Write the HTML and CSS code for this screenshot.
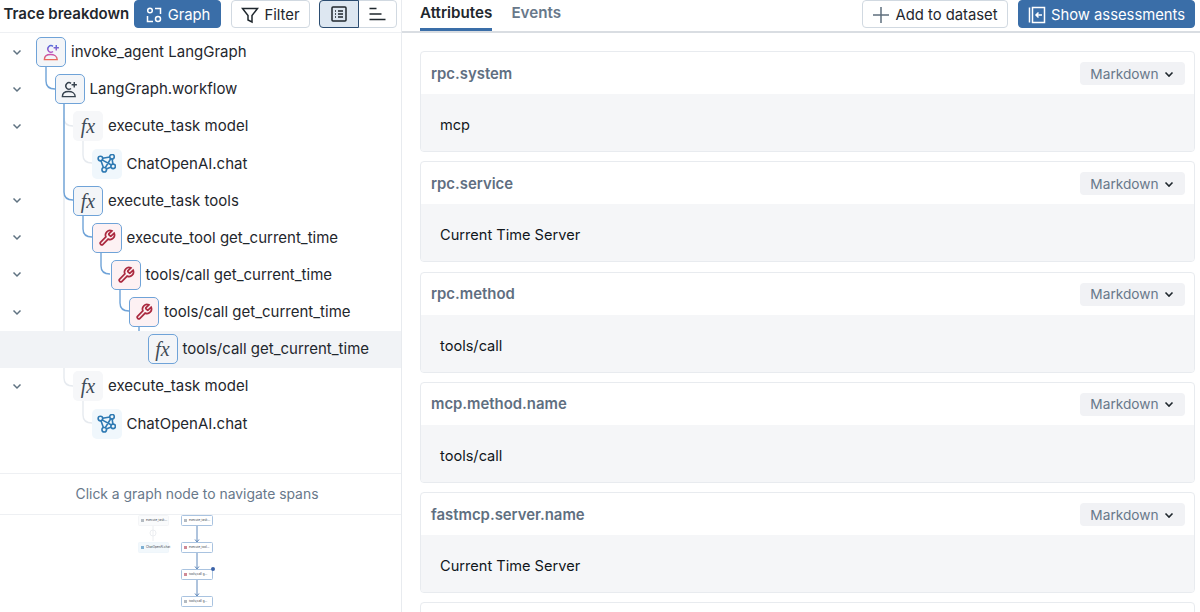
FILE: index.html
```html
<!DOCTYPE html>
<html>
<head>
<link rel="stylesheet" href="styles.css">
</head>
<body>

<svg class="defs" width="0" height="0">
  <defs>
    <linearGradient id="agentGradient" gradientUnits="userSpaceOnUse" x1="0" y1="2" x2="0" y2="18">
      <stop offset="0" stop-color="#4f6fdc"/>
      <stop offset="0.55" stop-color="#c04fc0"/>
      <stop offset="1" stop-color="#ee6a4f"/>
    </linearGradient>
    <symbol id="person" viewBox="0 0 20 20">
      <path d="M11.6 3.6A3.4 3.4 0 1 0 11.6 9"/>
      <path d="M2.5 17.5c0-3.6 2.9-5.4 6.5-5.4s7 1.8 7 5.4z"/>
      <path d="M15 2.2v5.6M12.2 5h5.6"/>
    </symbol>
    <symbol id="wrench" viewBox="0 0 24 24">
      <path d="M14.7 6.3a1 1 0 0 0 0 1.4l1.6 1.6a1 1 0 0 0 1.4 0l3.77-3.77a6 6 0 0 1-7.94 7.94l-6.91 6.91a2.12 2.12 0 0 1-3-3l6.91-6.91a6 6 0 0 1 7.94-7.94l-3.76 3.76z"/>
    </symbol>
    <symbol id="model" viewBox="0 0 20 20">
      <circle cx="3.6" cy="4.8" r="2.4"/>
      <circle cx="15.8" cy="2.9" r="2.4"/>
      <circle cx="17" cy="13" r="2.4"/>
      <circle cx="7.6" cy="16.6" r="2.4"/>
      <path d="M5.8 4.5l7.8-1.3M15.9 5.1l.9 5.7M15 13.8l-5.3 2M6.8 14.5L4.2 7M5.4 6.2l9.8 5.4M8.6 14.6l6-9.9"/>
    </symbol>
    <symbol id="chevron" viewBox="0 0 12 12">
      <path d="M2.5 4.5L6 8l3.5-3.5"/>
    </symbol>
  </defs>
</svg>

<div class="page">
  <section class="left-panel">
    <header class="left-header">
      <span class="panel-title">Trace breakdown</span>
      <button class="btn btn-primary btn-graph">
        <svg class="btn-icon" viewBox="0 0 18 18"><circle cx="5" cy="4.5" r="2.3"/><path d="M10 2.5h5.5V8M2.5 10v5.5H8"/><circle cx="13" cy="13" r="2.5"/></svg>
        Graph
      </button>
      <button class="btn btn-filter">
        <svg class="btn-icon" viewBox="0 0 18 18"><path d="M1.5 2.5h15L11 9.5V16l-4-2V9.5z"/></svg>
        Filter
      </button>
      <div class="toggle">
        <span class="toggle-item toggle-on">
          <svg class="btn-icon" viewBox="0 0 18 18"><rect x="2" y="2" width="14" height="14" rx="1"/><path d="M5 6h1M8 6h5M5 9h1M8 9h5M5 12h1M8 12h5"/></svg>
        </span>
        <span class="toggle-item">
          <svg class="btn-icon" viewBox="0 0 18 18"><path d="M1.5 3.5h7M1.5 9h12M1.5 14.5h16"/></svg>
        </span>
      </div>
    </header>

    <div class="tree">
      <svg class="links" width="401" height="440" viewBox="0 33 401 440">
        <path class="link-off" d="M64 104V378Q64 386 73 386"/>
        <path class="link-off" d="M64 118Q64 126 73 126"/>
        <path class="link-off" d="M83 141V155Q83 163 92 163"/>
        <path class="link-off" d="M83 401V415Q83 423 92 423"/>
        <path class="link-on" d="M46 67V81Q46 89 55 89"/>
        <path class="link-on" d="M64 104V192Q64 200 73 200"/>
        <path class="link-on" d="M83 215V229Q83 237 92 237"/>
        <path class="link-on" d="M101 252V266Q101 274 110 274"/>
        <path class="link-on" d="M120 289V303Q120 311 129 311"/>
        <path class="link-on" d="M139 326V340Q139 348 148 348"/>
      </svg>

      <div class="row lvl-0">
        <svg class="chevron"><use href="#chevron"/></svg>
        <span class="node node-on"><svg class="icon icon-agent"><use href="#person"/></svg></span>
        <span class="row-label">invoke_agent LangGraph</span>
      </div>
      <div class="row lvl-1">
        <svg class="chevron"><use href="#chevron"/></svg>
        <span class="node node-on"><svg class="icon icon-person"><use href="#person"/></svg></span>
        <span class="row-label">LangGraph.workflow</span>
      </div>
      <div class="row lvl-2">
        <svg class="chevron"><use href="#chevron"/></svg>
        <span class="node node-off"><span class="fx">fx</span></span>
        <span class="row-label">execute_task model</span>
      </div>
      <div class="row lvl-3">
        <span class="node node-off node-model"><svg class="icon icon-model"><use href="#model"/></svg></span>
        <span class="row-label">ChatOpenAI.chat</span>
      </div>
      <div class="row lvl-2">
        <svg class="chevron"><use href="#chevron"/></svg>
        <span class="node node-on"><span class="fx">fx</span></span>
        <span class="row-label">execute_task tools</span>
      </div>
      <div class="row lvl-3">
        <svg class="chevron"><use href="#chevron"/></svg>
        <span class="node node-on node-tool"><svg class="icon icon-wrench"><use href="#wrench"/></svg></span>
        <span class="row-label">execute_tool get_current_time</span>
      </div>
      <div class="row lvl-4">
        <svg class="chevron"><use href="#chevron"/></svg>
        <span class="node node-on node-tool"><svg class="icon icon-wrench"><use href="#wrench"/></svg></span>
        <span class="row-label">tools/call get_current_time</span>
      </div>
      <div class="row lvl-5">
        <svg class="chevron"><use href="#chevron"/></svg>
        <span class="node node-on node-tool"><svg class="icon icon-wrench"><use href="#wrench"/></svg></span>
        <span class="row-label">tools/call get_current_time</span>
      </div>
      <div class="row lvl-6 row-selected">
        <span class="node node-on"><span class="fx">fx</span></span>
        <span class="row-label">tools/call get_current_time</span>
      </div>
      <div class="row lvl-2">
        <svg class="chevron"><use href="#chevron"/></svg>
        <span class="node node-off"><span class="fx">fx</span></span>
        <span class="row-label">execute_task model</span>
      </div>
      <div class="row lvl-3">
        <span class="node node-off node-model"><svg class="icon icon-model"><use href="#model"/></svg></span>
        <span class="row-label">ChatOpenAI.chat</span>
      </div>
    </div>

    <div class="hint">Click a graph node to navigate spans</div>

    <div class="minimap">
      <svg class="mini-links" width="401" height="97" viewBox="0 515 401 97">
        <path d="M197 525V541M197 552V568M197 579V595"/>
        <path d="M195 539.5l2 2.5 2-2.5M195 566.5l2 2.5 2-2.5M195 593.5l2 2.5 2-2.5"/>
        <path class="mini-off" d="M153 525V541"/>
        <circle class="mini-off" cx="153" cy="533" r="3"/>
      </svg>
      <div class="mini-node mini-a">execute_task...</div>
      <div class="mini-node mini-b">execute_task...</div>
      <div class="mini-node mini-c">ChatOpenAI.chat</div>
      <div class="mini-node mini-d">execute_tool...</div>
      <div class="mini-node mini-e">tools/call g...</div>
      <div class="mini-node mini-f">tools/call g...</div>
      <span class="mini-dot"></span>
    </div>
  </section>

  <section class="right-panel">
    <header class="right-header">
      <nav class="tabs">
        <span class="tab tab-active">Attributes</span>
        <span class="tab">Events</span>
      </nav>
      <div class="actions">
        <button class="btn btn-add">
          <svg class="btn-icon plus-icon" viewBox="0 0 18 18"><path d="M9 1v16M1 9h16"/></svg>
          Add to dataset
        </button>
        <button class="btn btn-primary btn-show">
          <svg class="btn-icon" viewBox="0 0 18 18"><path d="M1.5 1.5v15M4.5 1.5h12v15h-12zM14 9H8M10.5 6.5L8 9l2.5 2.5"/></svg>
          Show assessments
        </button>
      </div>
    </header>

    <div class="cards">
      <article class="card">
        <div class="card-head"><span class="card-title">rpc.system</span><span class="pill">Markdown <svg class="pill-chevron"><use href="#chevron"/></svg></span></div>
        <div class="card-body">mcp</div>
      </article>
      <article class="card">
        <div class="card-head"><span class="card-title">rpc.service</span><span class="pill">Markdown <svg class="pill-chevron"><use href="#chevron"/></svg></span></div>
        <div class="card-body">Current Time Server</div>
      </article>
      <article class="card">
        <div class="card-head"><span class="card-title">rpc.method</span><span class="pill">Markdown <svg class="pill-chevron"><use href="#chevron"/></svg></span></div>
        <div class="card-body">tools/call</div>
      </article>
      <article class="card">
        <div class="card-head"><span class="card-title">mcp.method.name</span><span class="pill">Markdown <svg class="pill-chevron"><use href="#chevron"/></svg></span></div>
        <div class="card-body">tools/call</div>
      </article>
      <article class="card">
        <div class="card-head"><span class="card-title">fastmcp.server.name</span><span class="pill">Markdown <svg class="pill-chevron"><use href="#chevron"/></svg></span></div>
        <div class="card-body">Current Time Server</div>
      </article>
      <article class="card"></article>
    </div>
  </section>
</div>

</body>
</html>
```

FILE: styles.css
```css
* {
  box-sizing: border-box;
}

html,
body {
  margin: 0;
  height: 612px;
  overflow: hidden;
  background: #fff;
}

body {
  font-family: Inter, "Liberation Sans", sans-serif;
  font-size: 15px;
  color: #1f272d;
}

.defs {
  position: absolute;
}

.page {
  display: flex;
  height: 612px;
  overflow: hidden;
}

/* left side */
.left-panel {
  display: flex;
  flex-direction: column;
  width: 402px;
  flex-shrink: 0;
  border-right: 1px solid #e8ebef;
}

.left-header {
  display: flex;
  align-items: flex-start;
  height: 33px;
  padding-left: 3.5px;
  border-bottom: 1px solid #eef0f3;
}

.panel-title {
  font-size: 15px;
  font-weight: 600;
  line-height: 28px;
  width: 130.5px;
  flex-shrink: 0;
  white-space: nowrap;
}

.btn {
  display: inline-flex;
  align-items: center;
  justify-content: center;
  gap: 5px;
  height: 28px;
  padding: 1px 0 0;
  border: 1px solid #d1d9e1;
  border-radius: 4px;
  background: #fff;
  color: #1f272d;
  font-family: inherit;
  font-size: 14.8px;
  white-space: nowrap;
}

.btn-primary {
  border-color: #3a6ea8;
  background: #3a6ea8;
  color: #fff;
}

.btn-graph {
  width: 87px;
}

.btn-filter {
  width: 79px;
  margin-left: 10px;
}

.btn-icon {
  width: 18px;
  height: 18px;
  fill: none;
  stroke: currentColor;
  stroke-width: 1.5;
  flex-shrink: 0;
}

.toggle {
  display: flex;
  width: 78px;
  height: 28px;
  margin-left: 9px;
  border: 1px solid #d1d9e1;
  border-radius: 4px;
}

.toggle-item {
  display: flex;
  align-items: center;
  justify-content: center;
  flex: 1;
}

.toggle-on {
  margin: -1px 0 -1px -1px;
  border: 1px solid #2b4c70;
  border-radius: 4px 0 0 4px;
  background: #dde7f1;
}

.tree {
  position: relative;
  height: 440px;
  padding-top: 0.6px;
}

.links {
  position: absolute;
  top: 0;
  left: 0;
  fill: none;
  stroke-width: 1.4;
}

.link-on {
  stroke: #6fa3d8;
}

.link-off {
  stroke: #e6eaef;
}

.row {
  position: relative;
  display: flex;
  align-items: center;
  height: 37.15px;
  white-space: nowrap;
}

.row-selected {
  background: #f1f3f6;
}

.lvl-0 { padding-left: 36px; }
.lvl-1 { padding-left: 54.5px; }
.lvl-2 { padding-left: 73px; }
.lvl-3 { padding-left: 91.5px; }
.lvl-4 { padding-left: 110.5px; }
.lvl-5 { padding-left: 129px; }
.lvl-6 { padding-left: 147.5px; }

.chevron {
  position: absolute;
  left: 11px;
  top: 12px;
  width: 12px;
  height: 12px;
  fill: none;
  stroke: #5f7281;
  stroke-width: 1.5;
}

.node {
  position: relative;
  z-index: 1;
  display: flex;
  align-items: center;
  justify-content: center;
  width: 30px;
  height: 30px;
  flex-shrink: 0;
  border-radius: 5px;
}

.node-on {
  border: 1.5px solid #6fa3d8;
  background: #f3f5f8;
}

.node-off {
  background: #f6f7f9;
}

.node-model {
  background: #f0f7fc;
}

.node-tool {
  background: #fdf1f3;
}

.row-label {
  margin-left: 5px;
  font-size: 15px;
  line-height: 20px;
}

.icon {
  width: 19px;
  height: 19px;
  fill: none;
  stroke-width: 1.5;
}

.icon-agent {
  stroke: url(#agentGradient);
}

.icon-person {
  stroke: #37434f;
}

.icon-model {
  stroke: #2f7ab3;
  stroke-width: 1.7;
}

.icon-wrench {
  width: 18px;
  height: 18px;
  stroke: #ab2a40;
  stroke-width: 2.3;
}

.fx {
  font-family: "Liberation Serif", serif;
  font-style: italic;
  font-size: 20px;
  line-height: 1;
  color: #3f4b57;
  letter-spacing: 0;
}

.hint {
  height: 42px;
  padding-right: 7px;
  border-top: 1px solid #eef0f3;
  border-bottom: 1px solid #eef0f3;
  color: #68788a;
  font-size: 13.9px;
  line-height: 40px;
  text-align: center;
}

.minimap {
  position: relative;
  flex: 1;
  overflow: hidden;
}

.mini-links {
  position: absolute;
  top: 0;
  left: 0;
  fill: none;
  stroke: #5f88bb;
  stroke-width: 1;
}

.mini-off {
  stroke: #eceef1;
}

.mini-node {
  position: absolute;
  width: 32px;
  height: 11px;
  padding-left: 7px;
  border: 1px solid #a9c3e0;
  border-radius: 1.5px;
  background: #fff;
  color: #3a444e;
  font-size: 3px;
  line-height: 9px;
  white-space: nowrap;
}

.mini-a { left: 138px; top: 0; width: 31px; border-color: #f4f5f7; background: #fafbfc; }
.mini-b { left: 181px; top: 0; }
.mini-c { left: 138px; top: 27px; width: 31px; border-color: #eff6fb; background: #f2f8fc; }
.mini-d { left: 181px; top: 27px; }
.mini-e { left: 181px; top: 54px; }
.mini-f { left: 181px; top: 81px; }

.mini-node::before {
  content: "";
  position: absolute;
  left: 2px;
  top: 3px;
  width: 3px;
  height: 3px;
  background: #b4bbc2;
}

.mini-c::before {
  background: #7fb0d3;
}

.mini-d::before,
.mini-e::before {
  background: #d08a96;
}

.mini-dot {
  position: absolute;
  left: 211px;
  top: 52px;
  width: 4px;
  height: 4px;
  border-radius: 50%;
  background: #3b62a8;
}

/* right side */
.right-panel {
  flex: 1;
  min-width: 0;
  height: 612px;
  overflow: hidden;
}

.right-header {
  display: flex;
  justify-content: space-between;
  align-items: flex-start;
  height: 33px;
  padding: 0 5px 0 18px;
  border-bottom: 2px solid #d9dde2;
}

.tabs {
  display: flex;
  gap: 19px;
}

.tab {
  height: 31px;
  padding-top: 4px;
  color: #68788a;
  font-size: 15.2px;
  font-weight: 600;
  line-height: 18px;
}

.tab-active {
  border-bottom: 3px solid #3a6ea8;
  color: #1f272d;
}

.actions {
  display: flex;
  gap: 10px;
}

.btn-add {
  width: 146px;
}

.plus-icon {
  color: #5f6f7d;
}

.btn-show {
  width: 177px;
}

.cards {
  display: flex;
  flex-direction: column;
  gap: 9.3px;
  padding: 18px 5px 0 18px;
}

.card {
  height: 101px;
  flex-shrink: 0;
  display: flex;
  flex-direction: column;
  border: 1px solid #e8ebef;
  border-radius: 4px;
  overflow: hidden;
}

.card-head {
  display: flex;
  justify-content: space-between;
  align-items: center;
  height: 42px;
  padding: 1px 9px 0 10px;
  flex-shrink: 0;
}

.card-title {
  color: #5f6f81;
  font-size: 14.9px;
  font-weight: 600;
}

.pill {
  display: flex;
  align-items: center;
  justify-content: center;
  gap: 4px;
  width: 105px;
  height: 23px;
  border-radius: 4px;
  background: #f1f2f5;
  color: #68788a;
  font-size: 13.7px;
}

.pill-chevron {
  width: 12px;
  height: 12px;
  fill: none;
  stroke: #1f272d;
  stroke-width: 1.6;
}

.card-body {
  flex: 1;
  padding: 22px 19px 0;
  background: #f5f6f8;
  color: #11171c;
  font-size: 14.6px;
  line-height: 18px;
}
```
